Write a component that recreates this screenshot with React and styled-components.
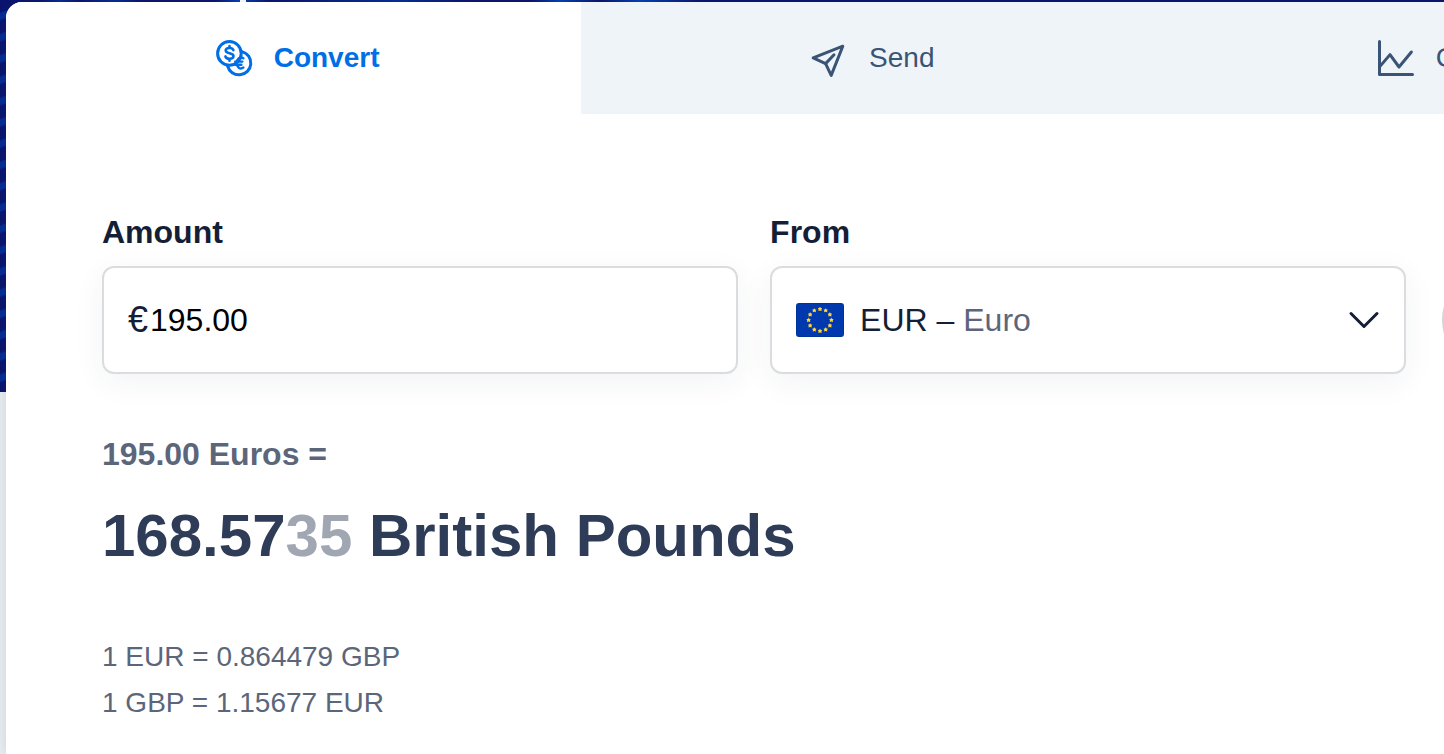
import React, { useState } from "react";
import styled, { createGlobalStyle } from "styled-components";

const GlobalStyle = createGlobalStyle`
  * {
    box-sizing: border-box;
  }
  body {
    margin: 0;
    font-family: "Liberation Sans", Arial, sans-serif;
    color: #141e37;
  }
`;

const Page = styled.div`
  display: flex;
  min-height: 100vh;
  padding: 2px 0 0 6px;
  overflow: hidden;
  background:
    linear-gradient(90deg, transparent 240px, #ffffff 240px, #ffffff 246px, transparent 246px) 0 0 / 100% 2px no-repeat,
    linear-gradient(90deg, #0a146e 40px, #062c96 60px, #0a146e 80px, #062c96 115px, #0a146e 140px, #0a146e 215px, #0540b4 240px, #0a146e 270px, #062c96 400px, #0a146e 470px, #0a146e 530px, #0540b4 560px, #0a146e 600px, #0540b4 640px, #0a146e 700px) 0 0 / 100% 2px no-repeat,
    repeating-linear-gradient(160deg, #0a146e 0px, #0a146e 11px, #062c96 13px, #062c96 18px, #0a146e 20px) 0 0 / 100% 392px no-repeat,
    #e8edf1;
`;

const Card = styled.main`
  flex: 1;
  min-width: 0;
  background: #ffffff;
  border-top-left-radius: 16px;
  box-shadow: 0 0 12px rgba(35, 55, 80, 0.14);
  overflow: hidden;
`;

const Tabs = styled.nav`
  display: flex;
`;

const Tab = styled.button`
  flex: 0 0 40%;
  display: flex;
  align-items: center;
  justify-content: center;
  gap: 22px;
  height: 112px;
  padding: 0 0 0 8px;
  border: none;
  background: ${({ $active }) => ($active ? "#ffffff" : "#eff4f8")};
  color: ${({ $active }) => ($active ? "#006fe6" : "#3a5475")};
  font-family: inherit;
  font-size: 28px;
  font-weight: ${({ $active }) => ($active ? 700 : 400)};
  line-height: 32px;
  cursor: pointer;
`;

const TabIcon = styled.svg`
  flex: none;
  width: 36px;
  height: 36px;
  overflow: visible;
  fill: none;
  stroke: currentColor;
  stroke-width: 3;
  stroke-linecap: round;
  stroke-linejoin: round;
`;

const Panel = styled.section`
  padding: 98px 0 24px 96px;
`;

const Form = styled.form`
  display: grid;
  grid-template-columns: 47.4% 47.4% 96px;
  column-gap: 32px;
  align-items: end;
`;

const Field = styled.div`
  display: flex;
  flex-direction: column;
  gap: 14px;
`;

const Label = styled.label`
  font-size: 32px;
  font-weight: 700;
  line-height: 40px;
`;

const Control = styled.div`
  position: relative;
  display: flex;
  align-items: center;
  height: 108px;
  padding: 0 24px;
  border: 2px solid #dcdcde;
  border-radius: 12px;
  background: #ffffff;
  box-shadow: 0 8px 32px rgba(35, 55, 80, 0.06);
  font-size: 32px;
  line-height: 40px;
`;

const Symbol = styled.span`
  width: 22px;
  font-size: 36px;
`;

const AmountInput = styled.input`
  flex: 1;
  min-width: 0;
  padding: 0;
  border: none;
  outline: none;
  background: transparent;
  color: #000000;
  font: inherit;
`;

const Flag = styled.svg`
  flex: none;
  width: 48px;
  height: 34px;
  margin-right: 16px;
`;

const Currency = styled.span`
  flex: 1;
`;

const CurrencyName = styled.span`
  color: #5c667b;
`;

const Chevron = styled.svg`
  flex: none;
  width: 32px;
  height: 32px;
  fill: none;
  stroke: #141e37;
  stroke-width: 3;
  stroke-linecap: round;
  stroke-linejoin: round;
`;

const CurrencySelect = styled.select`
  position: absolute;
  inset: 0;
  width: 100%;
  opacity: 0;
  font: inherit;
  cursor: pointer;
`;

const SwapButton = styled.button`
  width: 96px;
  height: 96px;
  margin: 0 4px 6px;
  border: 2px solid #d4d5d8;
  border-radius: 50%;
  background: #ffffff;
  cursor: pointer;
`;

const FromAmount = styled.p`
  margin: 60px 0 24px;
  color: #5c667b;
  font-size: 32px;
  font-weight: 700;
  line-height: 40px;
`;

const Result = styled.h1`
  margin: 0 0 60px;
  color: #2e3c57;
  font-size: 60px;
  font-weight: 700;
  line-height: 76px;
`;

const FadedDigits = styled.span`
  color: #a1a6b3;
`;

const Rate = styled.p`
  margin: 0;
  color: #5c667b;
  font-size: 28px;
  line-height: 46px;
`;

const CURRENCIES = {
  EUR: "Euro",
  GBP: "British Pound",
};

const ConvertIcon = () => (
  <TabIcon viewBox="0 0 36 36" aria-hidden="true">
    <circle cx="13.4" cy="13.4" r="11.8" />
    <path d="M26 11.6A11.8 11.8 0 1 1 11.6 26" />
    <path
      strokeWidth="2.6"
      d="M17.4 10.2C16.9 8.6 15.5 8 13.5 8C11.1 8 9.7 9 9.7 10.5C9.7 14.1 17.5 12.2 17.5 16C17.5 17.8 15.9 18.8 13.5 18.8C11.3 18.8 9.8 18 9.4 16.4M13.5 6V8M13.5 18.8V20.8"
    />
    <path
      strokeWidth="2.4"
      d="M27.4 18.2C23.8 16.2 20.9 18.8 20.9 22.8C20.9 28 24.4 29.6 27.4 27.6M19.2 21.6H26.4M19.2 24.8H25.4"
    />
  </TabIcon>
);

const SendIcon = () => (
  <TabIcon viewBox="0 0 36 36" aria-hidden="true">
    <path d="M2.2 17.8L31.8 6.2L20.2 35.4L14.6 23.6Z" />
    <path d="M14.6 23.6L23 14.8" />
  </TabIcon>
);

const ChartIcon = () => (
  <TabIcon viewBox="0 0 36 36" aria-hidden="true">
    <path d="M1.5 1.6V34.5H34.5" />
    <path d="M2 26.4L12 14.6L21 27L33.4 12" />
  </TabIcon>
);

const stars = Array.from({ length: 12 }, (_, i) => {
  const angle = (i * Math.PI) / 6;
  return { x: 24 + 11.4 * Math.sin(angle), y: 17 - 11 * Math.cos(angle) };
});

const EuroFlag = () => (
  <Flag viewBox="0 0 48 34" aria-hidden="true">
    <rect width="48" height="34" rx="3" fill="#003399" />
    <rect x="1" y="1" width="46" height="32" rx="2" fill="#0039ad" />
    {stars.map(({ x, y }) => (
      <path
        key={`${x}-${y}`}
        transform={`translate(${x} ${y})`}
        fill="#ffd43b"
        d="M0 -2.2L.9 -1L2.1 -.9L1.4 .4L1.6 1.9L0 1.4L-1.6 1.9L-1.4 .4L-2.1 -.9L-.9 -1Z"
      />
    ))}
  </Flag>
);

const App = () => {
  const [tab, setTab] = useState("convert");
  const [amount, setAmount] = useState("195.00");
  const [from, setFrom] = useState("EUR");

  return (
    <>
      <GlobalStyle />
      <Page>
        <Card>
          <Tabs>
            <Tab type="button" $active={tab === "convert"} onClick={() => setTab("convert")}>
              <ConvertIcon />
              Convert
            </Tab>
            <Tab type="button" $active={tab === "send"} onClick={() => setTab("send")}>
              <SendIcon />
              Send
            </Tab>
            <Tab type="button" $active={tab === "charts"} onClick={() => setTab("charts")}>
              <ChartIcon />
              Charts
            </Tab>
          </Tabs>
          <Panel>
            <Form onSubmit={(e) => e.preventDefault()}>
              <Field>
                <Label htmlFor="amount">Amount</Label>
                <Control>
                  <Symbol>€</Symbol>
                  <AmountInput
                    id="amount"
                    inputMode="decimal"
                    value={amount}
                    onChange={(e) => setAmount(e.target.value)}
                  />
                </Control>
              </Field>
              <Field>
                <Label htmlFor="from">From</Label>
                <Control>
                  <EuroFlag />
                  <Currency>
                    {from} – <CurrencyName>{CURRENCIES[from]}</CurrencyName>
                  </Currency>
                  <Chevron viewBox="0 0 32 32" aria-hidden="true">
                    <path d="M3 9.5L16 22.5L29 9.5" />
                  </Chevron>
                  <CurrencySelect id="from" value={from} onChange={(e) => setFrom(e.target.value)}>
                    <option value="EUR">EUR – Euro</option>
                    <option value="GBP">GBP – British Pound</option>
                  </CurrencySelect>
                </Control>
              </Field>
              <SwapButton type="button" aria-label="Swap currencies" />
            </Form>
            <FromAmount>195.00 Euros =</FromAmount>
            <Result>
              168.57<FadedDigits>35</FadedDigits> British Pounds
            </Result>
            <Rate>1 EUR = 0.864479 GBP</Rate>
            <Rate>1 GBP = 1.15677 EUR</Rate>
          </Panel>
        </Card>
      </Page>
    </>
  );
};

export default App;
